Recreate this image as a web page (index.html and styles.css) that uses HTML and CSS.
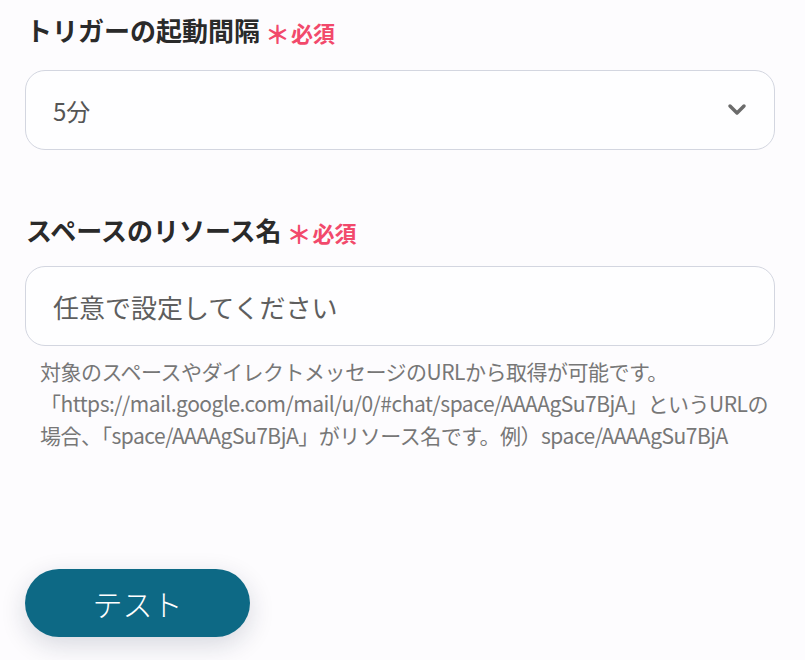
FILE: index.html
```html
<!DOCTYPE html>
<html lang="ja">

<head>
    <meta charset="UTF-8">
    <meta name="viewport" content="width=device-width, initial-scale=1.0">
    <title>トリガー設定</title>
    <link rel="stylesheet" href="styles.css">
</head>

<body>
    <main class="form">
        <div class="field">
            <label class="field-label">トリガーの起動間隔<span class="required"><span class="mark">＊</span>必須</span></label>
            <div class="select-box">
                <span class="select-value">5分</span>
                <svg class="chevron" width="20" height="14" viewBox="0 0 20 14">
                    <path d="M3 3 L10 10 L17 3" fill="none" stroke="#6b6b6b" stroke-width="3.5" stroke-linecap="round" stroke-linejoin="round"/>
                </svg>
            </div>
        </div>

        <div class="field field-second">
            <label class="field-label">スペースのリソース名<span class="required"><span class="mark">＊</span>必須</span></label>
            <input class="text-input" type="text" placeholder="任意で設定してください">
            <p class="help">対象のスペースやダイレクトメッセージのURLから取得が可能です。<br>「https://mail.google.com/mail/u/0/#chat/space/AAAAgSu7BjA」というURLの場合、「space/AAAAgSu7BjA」がリソース名です。例）space/AAAAgSu7BjA</p>
        </div>

        <div class="actions">
            <button class="test-button">テスト</button>
        </div>
    </main>
</body>

</html>
```

FILE: styles.css
```css
html {
    background-color: #fdfcfe;
}

body {
    margin: 0;
    padding: 0;
    background-color: #fdfcfe;
    font-family: "Noto Sans CJK JP", "Noto Sans", sans-serif;
    color: #2b2b2b;
}

.form {
    padding: 6px 28px 40px 25px;
}

.field-label {
    display: flex;
    align-items: center;
    font-size: 26px;
    font-weight: bold;
    color: #2a2a2a;
    line-height: 40px;
    padding-left: 1px;
}

.required {
    display: flex;
    align-items: center;
    color: #f2496b;
    font-size: 22px;
    font-weight: bold;
    margin-left: 5px;
    padding-top: 4px;
}

.mark {
    font-size: 25px;
    margin-right: 1px;
    padding-top: 3px;
}

.select-box {
    display: flex;
    align-items: center;
    justify-content: space-between;
    margin-top: 17px;
    height: 80px;
    box-sizing: border-box;
    border: 1px solid #d3d6e0;
    border-radius: 20px;
    background-color: #fefeff;
    padding: 0 27px 0 27px;
    margin-right: 2px;
}

.select-value {
    font-size: 24px;
    color: #555;
}

.field-second {
    margin-top: 56px;
}

.text-input {
    display: block;
    width: calc(100% - 2px);
    margin-top: 13px;
    height: 80px;
    box-sizing: border-box;
    border: 1px solid #d3d6e0;
    border-radius: 20px;
    background-color: #fefeff;
    padding: 0 27px;
    font-family: inherit;
    font-size: 26px;
    outline: none;
}

.text-input::placeholder {
    color: #5e5e5e;
}

.help {
    margin: 9px 0 0 15px;
    padding-right: 5px;
    font-size: 21px;
    letter-spacing: -0.5px;
    line-height: 32px;
    color: #777;
}

.actions {
    margin-top: 118px;
}

.test-button {
    width: 225px;
    height: 68px;
    border: none;
    border-radius: 34px;
    background-color: #0d6985;
    color: #fff;
    font-family: inherit;
    font-size: 30px;
    font-weight: 300;
    box-shadow: 0 8px 26px rgba(20, 30, 60, 0.16);
    cursor: pointer;
}
```
